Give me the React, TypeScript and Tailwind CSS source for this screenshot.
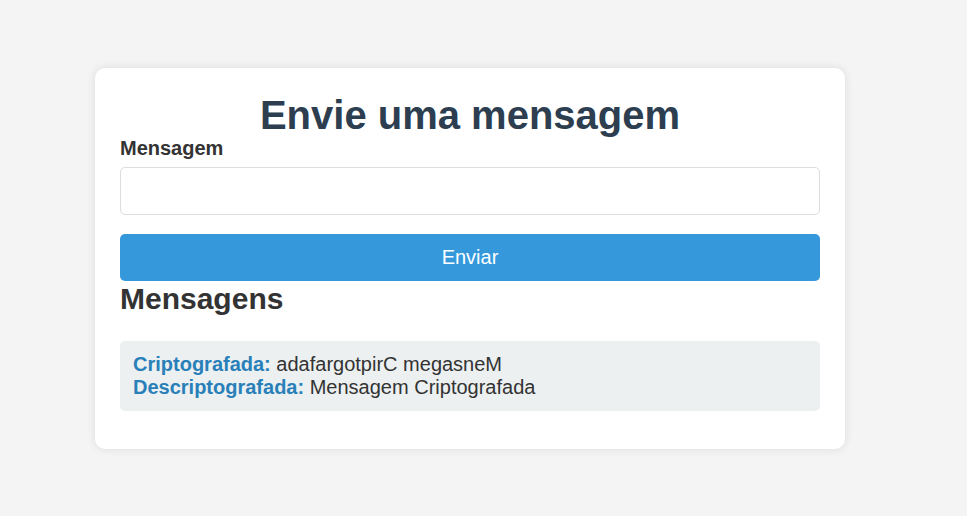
export default function App() {
  return (
    <div
      className="min-h-[516px] w-full bg-[#f4f4f4] pt-[68px]"
      style={{ fontFamily: '"Liberation Sans", Arial, sans-serif' }}
    >
      <div className="ml-[95px] w-[750px] rounded-[10px] bg-white px-[25px] pt-[24px] pb-[38px] text-[20px] leading-[23px] text-[#333] shadow-[0_0_10px_rgba(0,0,0,0.1)]">
        <h1 className="text-center text-[40px] leading-[46px] font-bold text-[#2c3e50]">
          Envie uma mensagem
        </h1>
        <label className="block font-bold mt-[-1px]">Mensagem</label>
        <input
          type="text"
          className="mt-[7px] block h-[48px] w-full rounded-[5px] border border-[#ddd] bg-white px-3 outline-none"
        />
        <button className="mt-[19px] block h-[47px] w-full rounded-[5px] bg-[#3498db] text-[20px] text-white">
          Enviar
        </button>
        <h2 className="text-[30px] leading-[35px] font-bold text-[#333]">Mensagens</h2>
        <div className="mt-[25px] rounded-[5px] bg-[#ecf0f1] px-[13px] py-3">
          <div>
            <span className="font-bold text-[#2980b9]">Criptografada:</span> adafargotpirC megasneM
          </div>
          <div>
            <span className="font-bold text-[#2980b9]">Descriptografada:</span> Mensagem Criptografada
          </div>
        </div>
      </div>
    </div>
  );
}
